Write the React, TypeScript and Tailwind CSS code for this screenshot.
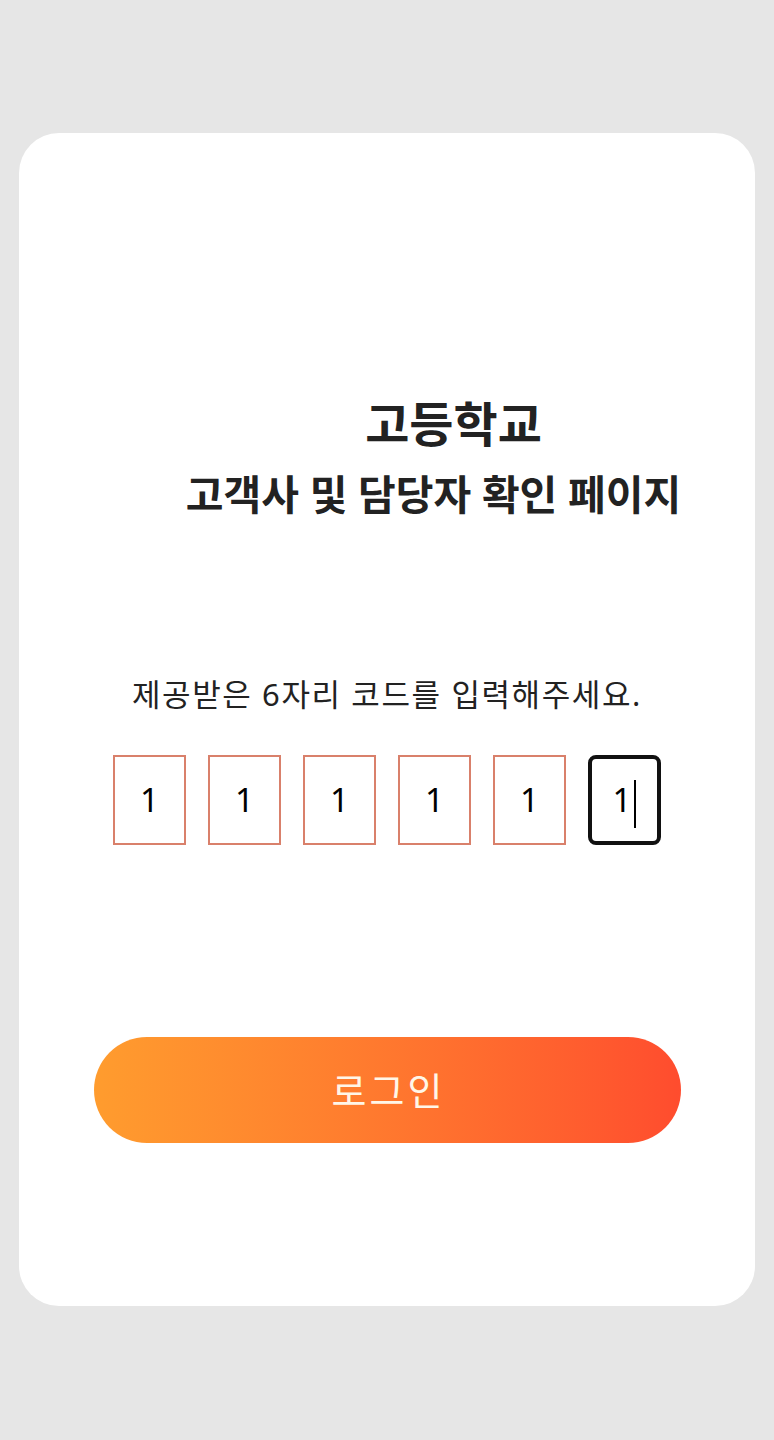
const DIGITS = ["1", "1", "1", "1", "1", "1"]

export default function App() {
  return (
    <div
      className="flex min-h-[1440px] w-full flex-col bg-[#e6e6e6] px-[19px] pt-[133px]"
      style={{ fontFamily: '"Noto Sans", "Noto Sans CJK KR", sans-serif' }}
    >
      <div className="flex h-[1173px] flex-col items-center rounded-[40px] bg-white">
        {/* 타이틀 */}
        <div className="mt-[259px] flex flex-col items-center">
          <h1 className="ml-[133px] text-[48px] font-bold leading-[64px] text-[#222]">고등학교</h1>
          <h2 className="ml-[93px] mt-[10px] text-[41px] font-bold leading-[56px] text-[#222]">
            고객사 및 담당자 확인 페이지
          </h2>
        </div>

        <p className="mt-[152px] text-[31px] leading-[40px] tracking-[1.6px] text-[#222]">
          제공받은 6자리 코드를 입력해주세요.
        </p>

        {/* 코드 입력 */}
        <div className="mt-[41px] flex gap-[22px]">
          {DIGITS.map((d, i) =>
            i === DIGITS.length - 1 ? (
              <div
                key={i}
                className="flex h-[90px] w-[73px] items-center justify-center rounded-[8px] border-[4px] border-[#111] text-[33px] text-black"
              >
                <span>{d}</span>
                <span className="ml-[3px] mt-[8px] h-[48px] w-[2px] bg-black" />
              </div>
            ) : (
              <div
                key={i}
                className="flex h-[90px] w-[73px] items-center justify-center border-2 border-[#d9806b] text-[33px] text-black"
              >
                {d}
              </div>
            )
          )}
        </div>

        <button
          type="button"
          className="mt-[192px] h-[106px] w-[587px] rounded-full bg-gradient-to-r from-[#ff9c2e] to-[#ff4c2e] pl-[3px] text-[38px] tracking-[3px] text-[#fff6e8]"
        >
          로그인
        </button>
      </div>
    </div>
  )
}
